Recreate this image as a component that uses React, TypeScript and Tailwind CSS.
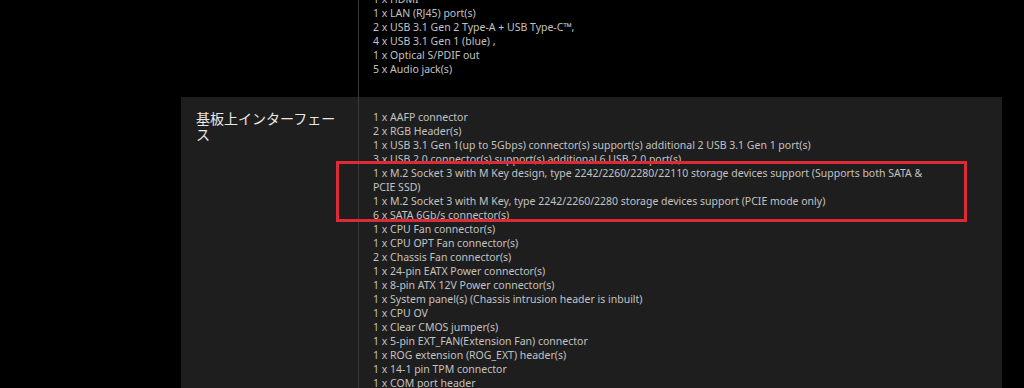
const outputs = [
  '1 x HDMI',
  '1 x LAN (RJ45) port(s)',
  '2 x USB 3.1 Gen 2 Type-A + USB Type-C™,',
  '4 x USB 3.1 Gen 1 (blue) ,',
  '1 x Optical S/PDIF out',
  '5 x Audio jack(s)',
];

const internal = [
  '1 x AAFP connector',
  '2 x RGB Header(s)',
  '1 x USB 3.1 Gen 1(up to 5Gbps) connector(s) support(s) additional 2 USB 3.1 Gen 1 port(s)',
  '3 x USB 2.0 connector(s) support(s) additional 6 USB 2.0 port(s)',
  '1 x M.2 Socket 3 with M Key design, type 2242/2260/2280/22110 storage devices support (Supports both SATA &',
  'PCIE SSD)',
  '1 x M.2 Socket 3 with M Key, type 2242/2260/2280 storage devices support (PCIE mode only)',
  '6 x SATA 6Gb/s connector(s)',
  '1 x CPU Fan connector(s)',
  '1 x CPU OPT Fan connector(s)',
  '2 x Chassis Fan connector(s)',
  '1 x 24-pin EATX Power connector(s)',
  '1 x 8-pin ATX 12V Power connector(s)',
  '1 x System panel(s) (Chassis intrusion header is inbuilt)',
  '1 x CPU OV',
  '1 x Clear CMOS jumper(s)',
  '1 x 5-pin EXT_FAN(Extension Fan) connector',
  '1 x ROG extension (ROG_EXT) header(s)',
  '1 x 14-1 pin TPM connector',
  '1 x COM port header',
];

function SpecList({ items }: { items: string[] }) {
  return (
    <ul className="text-[10.5px] leading-[14px] text-[#c2c2c2]">
      {items.map((item, i) => (
        <li key={i} className="whitespace-nowrap">
          {item}
        </li>
      ))}
    </ul>
  );
}

export default function App() {
  return (
    <div
      className="h-[388px] overflow-hidden bg-black"
      style={{ fontFamily: '"Noto Sans", "Noto Sans CJK JP", sans-serif' }}
    >
      <div className="-mt-[8px] ml-[181px] w-[821px]">
        {/* 背面I/O */}
        <div className="flex">
          <div className="w-[177px] shrink-0" />
          <div className="flex-1 border-l border-[#3a3a3a] pb-[21px] pl-[14px]">
            <SpecList items={outputs} />
          </div>
        </div>

        {/* 基板上インターフェース */}
        <div className="relative flex bg-[#1e1e1e]">
          <div className="w-[177px] shrink-0 pl-[15px] pr-[20px] pt-[13px] text-[14px] leading-[16px] text-[#e8e8e8] [font-family:'Noto_Sans_CJK_JP',sans-serif]">
            基板上インターフェース
          </div>
          <div className="flex-1 border-l border-[#3a3a3a] pb-[20px] pl-[14px] pt-[13px]">
            <SpecList items={internal} />
          </div>
          <div className="pointer-events-none absolute left-[155px] top-[64px] h-[61px] w-[631px] border-[3px] border-[#dc2b36]" />
        </div>
      </div>
    </div>
  );
}
